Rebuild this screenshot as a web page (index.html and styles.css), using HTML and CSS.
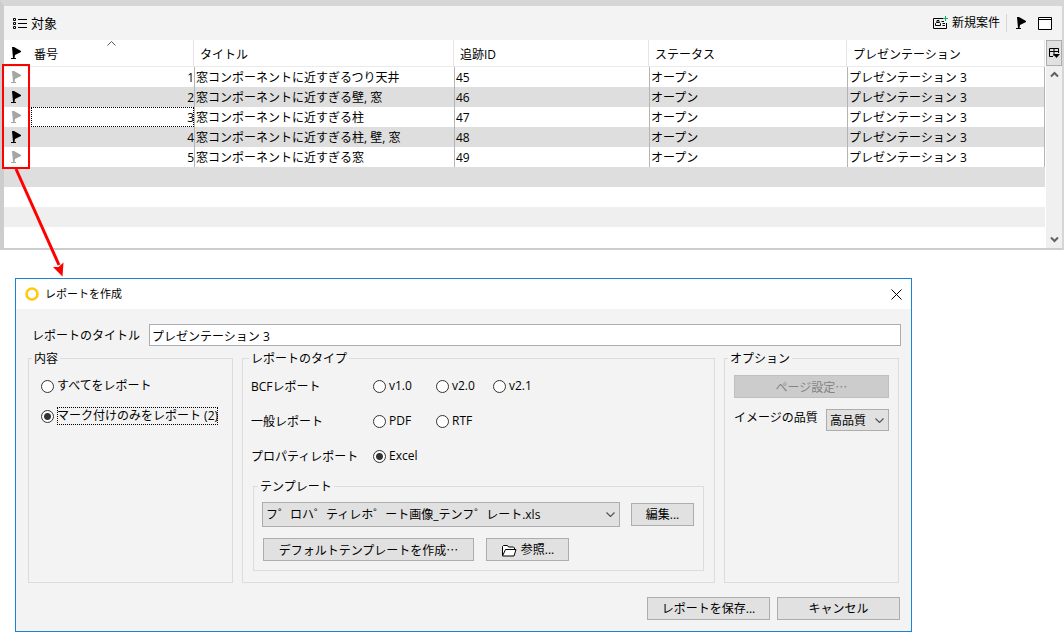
FILE: index.html
```
<!DOCTYPE html>
<html lang="ja">
<head>
    <meta charset="UTF-8">
    <title>レポートを作成</title>
    <meta name="viewport" content="width=device-width, initial-scale=1.0">
    <link rel="stylesheet" href="styles.css">
</head>
<body>
    <svg class="symbols" width="0" height="0" aria-hidden="true">
        <symbol id="flag" viewBox="0 0 11 14">
            <path d="M1 1h2l7 4v1L4 9 3.500 12H5v1H0v-1h2z" fill="currentColor"/>
        </symbol>
        <symbol id="chevron" viewBox="0 0 9 5">
            <path d="M.5.5l4 4 4-4" fill="none" stroke="currentColor" stroke-width="1.200"/>
        </symbol>
        <symbol id="arrow" viewBox="0 0 9 7">
            <path d="M1 1.500l3.500 3.500L8 1.500" fill="none" stroke="currentColor" stroke-width="2"/>
        </symbol>
    </svg>

    <section class="panel">
        <header class="toolbar">
            <svg class="list-icon" width="14" height="13" viewBox="0 0 14 13" fill="none" stroke="#000">
                <path d="M.5 1.500h2v2h-2zM.5 5.500h2v2h-2zM.5 9.500h2v2h-2zM5 2.500h9M5 6.500h9M5 10.500h9"/>
            </svg>
            <h1>対象</h1>
            <button class="tool new-issue">
                <svg width="16" height="15" viewBox="0 0 16 15" fill="none" stroke="#000">
                    <path d="M10 2.500H.5v10h13V7M2.500 9.500v-2l1-1h3l1 1v2zM4 4.500h2v2H4zM8.500 5.500H11M9.500 7.500H12M9.500 9.500H12"/>
                    <path d="M12.500 0v5M10 2.500h5" stroke="#00b86b"/>
                </svg>
                新規案件
            </button>
            <span class="separator"></span>
            <button class="tool" aria-label="マーク"><svg width="11" height="14"><use href="#flag"/></svg></button>
            <button class="tool window-button" aria-label="最大化">
                <svg width="14" height="13" viewBox="0 0 14 13"><path d="M.5.5h13v12H.5zM1 2.500h12" fill="#fff" stroke="#000"/></svg>
            </button>
        </header>

        <div class="list">
            <table>
                <colgroup>
                    <col class="col-flag"><col class="col-number"><col class="col-title">
                    <col class="col-id"><col class="col-status"><col>
                </colgroup>
                <thead>
                    <tr>
                        <th class="flag"><svg width="11" height="14"><use href="#flag"/></svg></th>
                        <th class="number">番号<svg class="sort" width="9" height="5" viewBox="0 0 9 5"><path d="M.5 4.500l4-4 4 4" fill="none" stroke="#555"/></svg></th>
                        <th>タイトル</th>
                        <th>追跡ID</th>
                        <th>ステータス</th>
                        <th>プレゼンテーション</th>
                    </tr>
                </thead>
                <tbody>
                    <tr>
                        <td class="flag off"><svg width="11" height="14"><use href="#flag"/></svg></td>
                        <td class="number">1</td><td>窓コンポーネントに近すぎるつり天井</td><td>45</td><td>オープン</td><td>プレゼンテーション 3</td>
                    </tr>
                    <tr class="marked">
                        <td class="flag"><svg width="11" height="14"><use href="#flag"/></svg></td>
                        <td class="number">2</td><td>窓コンポーネントに近すぎる壁, 窓</td><td>46</td><td>オープン</td><td>プレゼンテーション 3</td>
                    </tr>
                    <tr>
                        <td class="flag off"><svg width="11" height="14"><use href="#flag"/></svg></td>
                        <td class="number focused">3</td><td>窓コンポーネントに近すぎる柱</td><td>47</td><td>オープン</td><td>プレゼンテーション 3</td>
                    </tr>
                    <tr class="marked">
                        <td class="flag"><svg width="11" height="14"><use href="#flag"/></svg></td>
                        <td class="number">4</td><td>窓コンポーネントに近すぎる柱, 壁, 窓</td><td>48</td><td>オープン</td><td>プレゼンテーション 3</td>
                    </tr>
                    <tr>
                        <td class="flag off"><svg width="11" height="14"><use href="#flag"/></svg></td>
                        <td class="number">5</td><td>窓コンポーネントに近すぎる窓</td><td>49</td><td>オープン</td><td>プレゼンテーション 3</td>
                    </tr>
                    <tr class="marked"><td class="empty" colspan="6"></td></tr>
                    <tr><td class="empty" colspan="6"></td></tr>
                    <tr class="shade"><td class="empty" colspan="6"></td></tr>
                    <tr><td class="empty" colspan="6"></td></tr>
                </tbody>
            </table>
            <div class="side">
                <button class="columns-button" aria-label="列">
                    <svg width="11" height="12" viewBox="0 0 11 12" fill="none" stroke="#000">
                        <path d="M4 9.500H.5v-8h9V6M.5 4.500h9M5 1.500V9"/>
                        <path d="M4 7h7l-3.500 4z" fill="#000" stroke="none"/>
                    </svg>
                </button>
                <div class="scrollbar">
                    <button aria-label="上へ"><svg class="up" width="9" height="7"><use href="#arrow"/></svg></button>
                    <button aria-label="下へ"><svg width="9" height="7"><use href="#arrow"/></svg></button>
                </div>
            </div>
        </div>
    </section>

    <form class="dialog">
        <header class="titlebar">
            <svg width="14" height="14" viewBox="0 0 14 14"><circle cx="7" cy="7" r="5.500" fill="none" stroke="#ffc90e" stroke-width="2.600"/></svg>
            <h2>レポートを作成</h2>
            <button type="button" class="close" aria-label="閉じる">
                <svg width="11" height="11" viewBox="0 0 11 11"><path d="M.5.5l10 10M10.500.5l-10 10" stroke="#000"/></svg>
            </button>
        </header>

        <div class="title-row">
            <label for="report-title">レポートのタイトル</label>
            <input type="text" id="report-title" value="プレゼンテーション 3">
        </div>

        <div class="groups">
            <fieldset class="content">
                <legend>内容</legend>
                <label class="radio"><input type="radio" name="content"><span>すべてをレポート</span></label>
                <label class="radio"><input type="radio" name="content" checked><span class="focus">マーク付けのみをレポート (2)</span></label>
            </fieldset>

            <fieldset class="types">
                <legend>レポートのタイプ</legend>
                <div class="type-grid">
                    <span>BCFレポート</span>
                    <label class="radio"><input type="radio" name="type"><span>v1.0</span></label>
                    <label class="radio"><input type="radio" name="type"><span>v2.0</span></label>
                    <label class="radio"><input type="radio" name="type"><span>v2.1</span></label>
                    <span class="first">一般レポート</span>
                    <label class="radio"><input type="radio" name="type"><span>PDF</span></label>
                    <label class="radio"><input type="radio" name="type"><span>RTF</span></label>
                    <span class="first">プロパティレポート</span>
                    <label class="radio"><input type="radio" name="type" checked><span>Excel</span></label>
                </div>
                <fieldset class="template">
                    <legend>テンプレート</legend>
                    <div class="template-row">
                        <span class="select template-select">
                            <select aria-label="テンプレート"><option>フ゜ロハ゜ティレホ゜ート画像_テンフ゜レート.xls</option></select>
                            <svg width="9" height="5"><use href="#chevron"/></svg>
                        </span>
                        <button type="button" class="btn edit">編集...</button>
                    </div>
                    <div class="template-row">
                        <button type="button" class="btn jp default-template">デフォルトテンプレートを作成…</button>
                        <button type="button" class="btn browse">
                            <svg width="16" height="13" viewBox="0 0 16 13"><path d="M1.500 11.500v-9l1-1h4l1 1.500h5l1 1V5M1.500 12l3-6.500h10.500l-2 6.500z" fill="#fff" stroke="#000" stroke-linejoin="round"/></svg>
                            参照...
                        </button>
                    </div>
                </fieldset>
            </fieldset>

            <fieldset class="options">
                <legend>オプション</legend>
                <button type="button" class="btn jp" disabled>ページ設定…</button>
                <div class="quality">
                    <label for="quality">イメージの品質</label>
                    <span class="select">
                        <select id="quality"><option>高品質</option></select>
                        <svg width="9" height="5"><use href="#chevron"/></svg>
                    </span>
                </div>
            </fieldset>
        </div>

        <footer>
            <button type="button" class="btn">レポートを保存...</button>
            <button type="button" class="btn">キャンセル</button>
        </footer>
    </form>

    <!-- callout from the flag column to the dialog -->
    <svg class="callout" width="70" height="220" viewBox="0 0 70 220" aria-hidden="true">
        <path d="M3 5h26v103H3z" fill="none" stroke="#f00" stroke-width="2"/>
        <path d="M16 109l43 96" stroke="#f00" stroke-width="3"/>
        <path d="M62.500 216.500L53 207l5.500 0 5-4.500z" fill="#f00"/>
    </svg>
</body>
</html>
```
FILE: styles.css
```
* {
    margin: 0;
    padding: 0;
    box-sizing: border-box;
}

body {
    position: relative;
    background: #fff;
    color: #000;
    font-family: "Open Sans", "Noto Sans CJK JP", sans-serif;
    font-size: 12px;
    line-height: 18px;
}

button, input, select {
    font: inherit;
    color: inherit;
}

svg {
    display: block;
    flex: none;
}

.symbols {
    position: absolute;
}

/* issue list */
.panel {
    border: solid #d6d6d6;
    border-width: 6px 2px 2px 4px;
    border-left-color: #cdcdcd;
    border-bottom-color: #cdcdcd;
}

.toolbar {
    display: flex;
    align-items: center;
    height: 34px;
    padding: 0 10px 0 9px;
    background: #f3f3f3;
}

.toolbar h1 {
    margin: 0 auto 0 4px;
    font-size: 13px;
    font-weight: normal;
}

.tool {
    display: flex;
    align-items: center;
    gap: 3px;
    border: none;
    background: none;
}

.separator {
    width: 1px;
    height: 18px;
    margin: 0 9px 0 6px;
    background: #d6d6d6;
}

.window-button {
    margin-left: 11px;
}

.list {
    display: flex;
}

table {
    flex: 1;
    table-layout: fixed;
    width: 100%;
    border-collapse: separate;
    border-spacing: 0;
}

.col-flag { width: 27px; }
.col-number { width: 163px; }
.col-title { width: 260px; }
.col-id { width: 195px; }
.col-status { width: 198px; }

th {
    height: 27px;
    padding: 4px 0 0 6px;
    border-right: 1px solid #e5e5e5;
    border-bottom: 1px solid #ebebeb;
    font-weight: normal;
    text-align: left;
}

th.number {
    position: relative;
    padding-left: 3px;
}

.sort {
    position: absolute;
    top: 1px;
    left: 76px;
}

td {
    height: 20px;
    padding: 2px 0 0 1px;
    border-left: 1px solid #b4b4b4;
    white-space: nowrap;
}

td:last-child {
    border-right: 1px solid #b4b4b4;
}

td.number {
    border-left: none;
    text-align: right;
}

th.flag, td.flag {
    padding: 0 0 0 7px;
    border: none;
}

th.flag {
    border-bottom: 1px solid #ebebeb;
}

.off {
    color: #a6a6a6;
}

.focused {
    outline: 1px dotted #000;
    outline-offset: -1px;
}

.marked {
    background: #dedede;
}

.shade {
    background: #efefef;
}

td.empty {
    border: none;
}

tr:last-child .empty {
    height: 21px;
}

.side {
    display: flex;
    flex-direction: column;
    width: 17px;
    border-left: 1px solid #fff;
    background: #f0f0f0;
}

.columns-button {
    display: flex;
    align-items: center;
    justify-content: center;
    height: 26px;
    border: 1px solid #adadad;
    background: #e1e1e1;
}

.scrollbar {
    flex: 1;
    display: flex;
    flex-direction: column;
    justify-content: space-between;
}

.scrollbar button {
    display: flex;
    align-items: center;
    justify-content: center;
    height: 17px;
    border: none;
    background: none;
    color: #606060;
}

.up {
    transform: rotate(180deg);
}

/* report dialog */
.dialog {
    margin: 28px 152px 0 15px;
    border: 1px solid #1883d7;
    background: #f3f3f3;
}

.titlebar {
    display: flex;
    align-items: center;
    height: 30px;
    padding: 0 9px;
    background: #fff;
}

.titlebar h2 {
    margin: 0 auto 0 6px;
    font-size: 11px;
    font-weight: normal;
}

.close {
    border: none;
    background: none;
}

.title-row {
    display: flex;
    align-items: center;
    gap: 9px;
    padding: 15px 10px 0 16px;
}

.title-row label {
    padding-top: 2px;
}

.title-row input {
    flex: 1;
    height: 22px;
    padding: 1px 2px 0;
    border: 1px solid #abadb3;
    background: #fff;
}

fieldset {
    min-width: 0;
    border: 1px solid #dcdcdc;
}

legend {
    padding: 2px 2px 0;
}

.groups {
    display: grid;
    grid-template-columns: 205fr 473fr 175fr;
    gap: 9px;
    padding: 2px 12px 0;
}

.radio {
    display: flex;
    align-items: center;
    gap: 3px;
}

.radio input {
    appearance: none;
    width: 13px;
    height: 13px;
    border: 1px solid #333;
    border-radius: 50%;
    background: #fff;
}

.radio input:checked {
    background: radial-gradient(circle, #333 0 3px, #fff 4px);
}

.content {
    display: flex;
    flex-direction: column;
    gap: 12px;
    padding: 9px 12px;
}

.content legend {
    margin-left: -9px;
}

.focus {
    height: 18px;
    outline: 1px dotted #000;
    outline-offset: -1px;
    white-space: nowrap;
}

.types {
    padding: 9px 10px 11px 8px;
}

.types legend {
    margin-left: -2px;
}

.type-grid {
    display: grid;
    grid-template-columns: 122px 63px 57px 1fr;
    row-gap: 17px;
}

.type-grid > span {
    height: 18px;
    padding-top: 1px;
}

.first {
    grid-column: 1;
}

.template {
    margin: 11px 0 0 2px;
    padding: 6px 9px 9px 8px;
}

.template legend {
    margin-left: -4px;
}

.template-row {
    display: flex;
    align-items: center;
    gap: 11px;
}

.template-row + .template-row {
    gap: 12px;
    margin: 11px 0 0 1px;
}

.select {
    display: grid;
    align-items: center;
}

.select select {
    grid-area: 1 / 1;
    appearance: none;
    width: 100%;
    height: 22px;
    padding: 1px 20px 0 3px;
    border: 1px solid #adadad;
    border-radius: 0;
    background: #e1e1e1;
}

.select svg {
    grid-area: 1 / 1;
    justify-self: end;
    margin-right: 5px;
    color: #555;
    pointer-events: none;
}

.template-select {
    flex: 1;
}

.template-select select {
    height: 25px;
}

.btn {
    display: flex;
    align-items: center;
    justify-content: center;
    gap: 4px;
    height: 23px;
    padding-top: 1px;
    border: 1px solid #adadad;
    background: #e1e1e1;
    white-space: nowrap;
}

.btn:disabled {
    border-color: #bfbfbf;
    background: #ccc;
    color: #838383;
}

.jp {
    font-family: "Noto Sans CJK JP", sans-serif;
}

.edit {
    width: 63px;
}

.default-template {
    width: 211px;
}

.browse {
    width: 83px;
}

.options {
    padding: 7px 9px;
}

.options legend {
    margin-left: -6px;
}

.options .btn {
    width: 100%;
}

.quality {
    display: flex;
    justify-content: space-between;
    margin-top: 11px;
    white-space: nowrap;
}

.quality .select {
    width: 63px;
}

.dialog footer {
    display: flex;
    justify-content: flex-end;
    gap: 7px;
    padding: 14px 11px 11px;
}

.dialog footer .btn {
    width: 123px;
}

.callout {
    position: absolute;
    top: 60px;
    left: 0;
    pointer-events: none;
}
```
